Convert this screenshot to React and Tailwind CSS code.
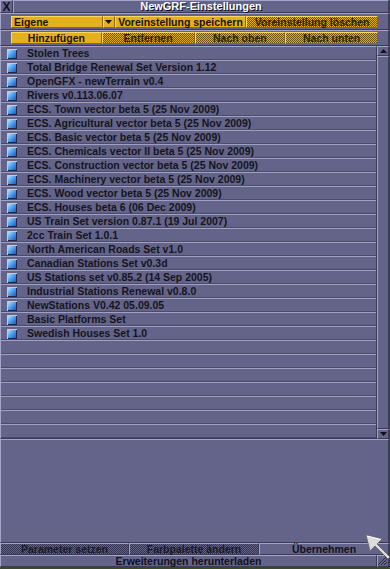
import React from "react";

const grfs = [
  "Stolen Trees",
  "Total Bridge Renewal Set Version 1.12",
  "OpenGFX - newTerrain v0.4",
  "Rivers v0.113.06.07",
  "ECS. Town vector beta 5 (25 Nov 2009)",
  "ECS. Agricultural vector beta 5 (25 Nov 2009)",
  "ECS. Basic vector beta 5 (25 Nov 2009)",
  "ECS. Chemicals vector II beta 5 (25 Nov 2009)",
  "ECS. Construction vector beta 5 (25 Nov 2009)",
  "ECS. Machinery vector beta 5 (25 Nov 2009)",
  "ECS. Wood vector beta 5 (25 Nov 2009)",
  "ECS. Houses beta 6 (06 Dec 2009)",
  "US Train Set version 0.87.1 (19 Jul 2007)",
  "2cc Train Set 1.0.1",
  "North American Roads Set v1.0",
  "Canadian Stations Set v0.3d",
  "US Stations set v0.85.2 (14 Sep 2005)",
  "Industrial Stations Renewal v0.8.0",
  "NewStations V0.42 05.09.05",
  "Basic Platforms Set",
  "Swedish Houses Set 1.0",
];

const bevel = "border border-t-[#a4a4c8] border-l-[#a4a4c8] border-b-[#3a3a56] border-r-[#3a3a56]";
const yellowBevel = "border border-t-[#fcd860] border-l-[#fcd860] border-b-[#8c6808] border-r-[#8c6808] bg-[#e4b01c]";

function YellowButton({ children, disabled, className = "" }) {
  return (
    <div className={`relative h-[12px] flex items-center justify-center text-[10.5px] font-bold text-[#181000] leading-none ${yellowBevel} ${className}`}>
      <span>{children}</span>
      {disabled && (
        <div className="absolute inset-0 bg-[image:repeating-conic-gradient(rgba(70,52,8,0.8)_0%_25%,transparent_0%_50%)] bg-[length:2px_2px]" />
      )}
    </div>
  );
}

function PurpleButton({ children, disabled, className = "" }) {
  return (
    <div className={`relative h-[12px] flex items-center justify-center text-[10.5px] font-bold text-[#101018] leading-none bg-[#64648a] ${bevel} ${className}`}>
      <span>{children}</span>
      {disabled && (
        <div className="absolute inset-0 bg-[image:repeating-conic-gradient(rgba(38,38,62,0.8)_0%_25%,transparent_0%_50%)] bg-[length:2px_2px]" />
      )}
    </div>
  );
}

function GrfIcon() {
  return (
    <svg width="10" height="10" viewBox="0 0 10 10" className="shrink-0">
      <defs>
        <linearGradient id="gi" x1="0" y1="0" x2="1" y2="1">
          <stop offset="0" stopColor="#b8e0ff" />
          <stop offset="0.5" stopColor="#4c9cec" />
          <stop offset="1" stopColor="#1c5cb8" />
        </linearGradient>
      </defs>
      <rect x="0" y="0" width="10" height="10" fill="#c8c8d8" />
      <rect x="1" y="1" width="9" height="9" fill="#24244a" />
      <rect x="1" y="1" width="8" height="8" fill="url(#gi)" />
    </svg>
  );
}

function Row({ name }) {
  return (
    <div className="h-[14px] flex items-center border-b border-[#a0a0c4] shadow-[inset_0_-1px_0_#4c4c68] pl-[6px]">
      {name && <GrfIcon />}
      {name && <span className="ml-[10px] text-[10.5px] font-bold text-[#14141c] leading-none whitespace-nowrap">{name}</span>}
    </div>
  );
}

function Cursor() {
  return (
    <svg width="26" height="26" viewBox="0 0 26 26" className="absolute left-[365px] top-[534px]">
      <polygon
        points="1,1 17,5 12,10 25,23 23,25 10,12 5,17"
        fill="#dcdcdc"
        stroke="#6c6c6c"
        strokeWidth="1"
      />
      <polyline points="2,2 16,5.5" stroke="#ffffff" strokeWidth="1" fill="none" />
    </svg>
  );
}

export default function App() {
  const rows = [...grfs, ...Array(28 - grfs.length).fill("")];
  return (
    <div className="relative w-[390px] h-[569px] overflow-hidden bg-[#3c4a24] font-['Liberation_Sans',Arial,sans-serif]">
      <div className="w-[389px] h-[567px] flex flex-col bg-[#64648a]">
        {/* title bar */}
        <div className="h-[13px] flex shrink-0">
          <div className={`w-[13px] flex items-center justify-center text-[12px] font-bold text-[#101018] leading-none ${bevel}`}>X</div>
          <div className={`flex-1 flex items-center justify-center ${bevel}`}>
            <span className="text-[11px] font-bold text-white leading-none [text-shadow:1px_1px_0_#101018]">NewGRF-Einstellungen</span>
          </div>
        </div>

        {/* presets */}
        <div className={`h-[17px] shrink-0 px-[10px] pt-[2px] ${bevel}`}>
          <div className="flex">
            <div className={`w-[92px] h-[12px] flex items-center pl-[2px] text-[10.5px] font-bold text-[#181000] leading-none ${yellowBevel}`}>Eigene</div>
            <div className={`w-[12px] h-[12px] flex items-center justify-center ${yellowBevel}`}>
              <svg width="7" height="4" viewBox="0 0 7 4"><polygon points="0,0 7,0 3.5,4" fill="#181000" /></svg>
            </div>
            <YellowButton className="w-[132px]">Voreinstellung speichern</YellowButton>
            <YellowButton className="w-[132px]" disabled>Voreinstellung löschen</YellowButton>
          </div>
        </div>

        {/* actions */}
        <div className={`h-[16px] shrink-0 px-[10px] pt-[1px] ${bevel}`}>
          <div className="flex">
            <YellowButton className="w-[91px]">Hinzufügen</YellowButton>
            <YellowButton className="w-[93px]" disabled>Entfernen</YellowButton>
            <YellowButton className="w-[91px]" disabled>Nach oben</YellowButton>
            <YellowButton className="w-[93px]" disabled>Nach unten</YellowButton>
          </div>
        </div>

        {/* list + scrollbar */}
        <div className="h-[393px] shrink-0 flex">
          <div className={`flex-1 overflow-hidden ${bevel}`}>
            {rows.map((r, i) => (
              <Row key={i} name={r} />
            ))}
          </div>
          <div className="w-[12px] flex flex-col">
            <div className={`h-[10px] flex items-center justify-center ${bevel}`}>
              <svg width="7" height="4" viewBox="0 0 7 4"><polygon points="3.5,0 7,4 0,4" fill="#101018" /></svg>
            </div>
            <div className={`flex-1 ${bevel}`} />
            <div className={`h-[10px] flex items-center justify-center ${bevel}`}>
              <svg width="7" height="4" viewBox="0 0 7 4"><polygon points="0,0 7,0 3.5,4" fill="#101018" /></svg>
            </div>
          </div>
        </div>

        {/* info panel */}
        <div className={`h-[104px] shrink-0 ${bevel}`} />

        {/* bottom buttons */}
        <div className="h-[12px] shrink-0 flex">
          <PurpleButton className="w-[129px]" disabled>Parameter setzen</PurpleButton>
          <PurpleButton className="w-[130px]" disabled>Farbpalette ändern</PurpleButton>
          <PurpleButton className="w-[130px]">Übernehmen</PurpleButton>
        </div>
        <div className="h-[12px] shrink-0 flex">
          <PurpleButton className="flex-1">Erweiterungen herunterladen</PurpleButton>
          <div className={`w-[12px] h-[12px] relative ${bevel}`}>
            <svg width="10" height="10" viewBox="0 0 10 10" className="absolute inset-0">
              <line x1="9" y1="3" x2="3" y2="9" stroke="#2a2a40" strokeWidth="1" />
              <line x1="9" y1="6" x2="6" y2="9" stroke="#2a2a40" strokeWidth="1" />
              <line x1="9" y1="0" x2="0" y2="9" stroke="#2a2a40" strokeWidth="1" />
            </svg>
          </div>
        </div>
      </div>
      <Cursor />
    </div>
  );
}
